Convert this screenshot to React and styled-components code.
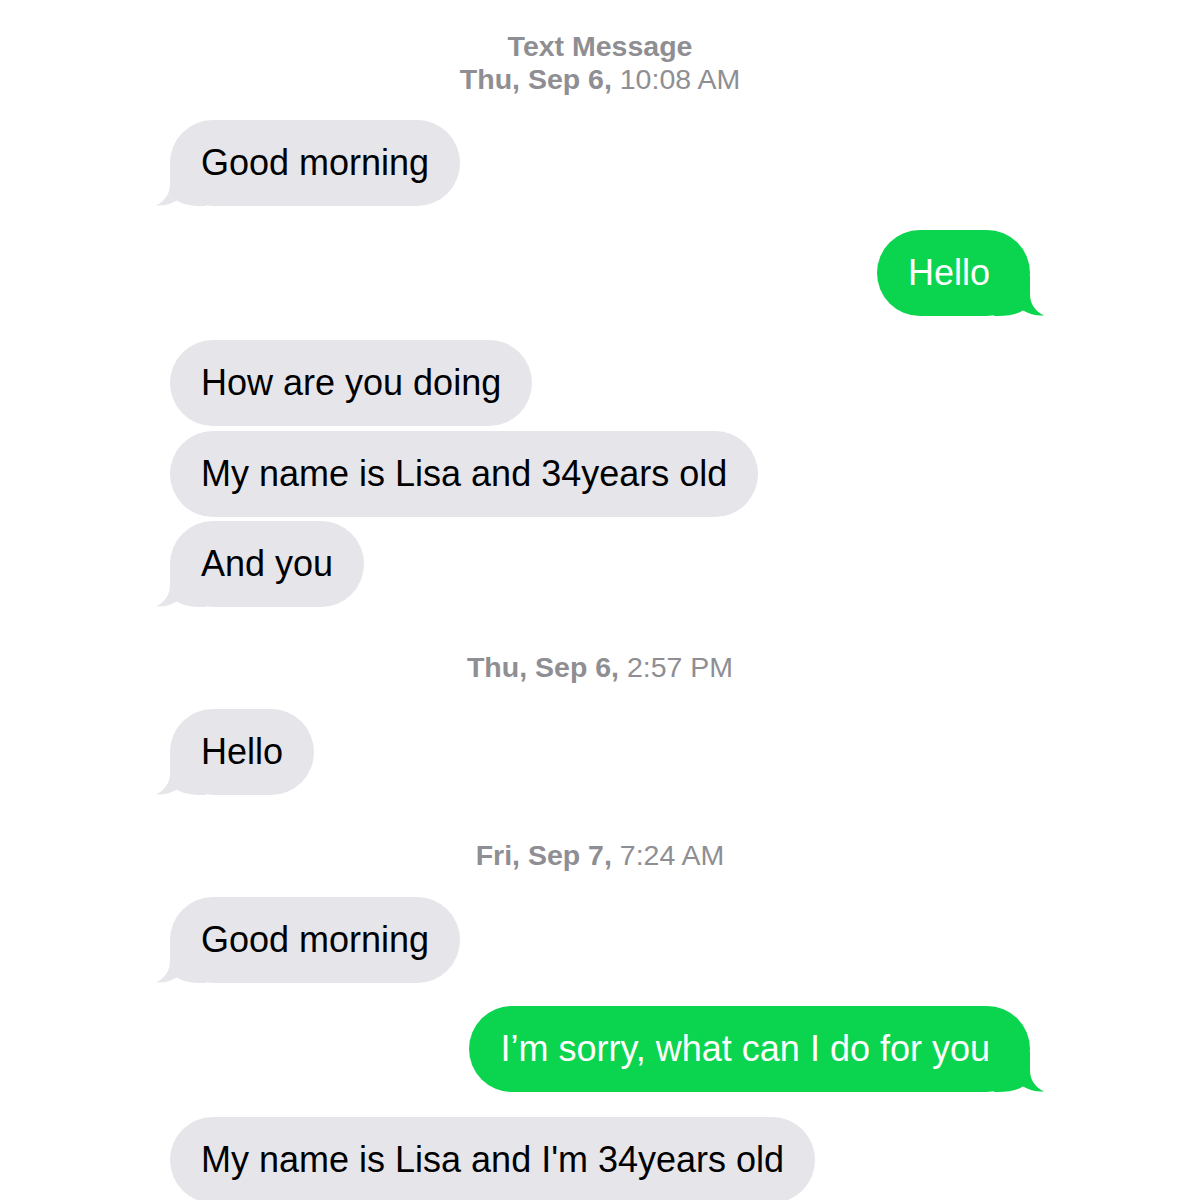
import React from "react";
import styled, { createGlobalStyle } from "styled-components";

const Global = createGlobalStyle`
    body {
        margin: 0;
        background: #ffffff;
        font-family: "Liberation Sans", Arial, sans-serif;
    }
`;

const Page = styled.div`
    width: 1200px;
    height: 1200px;
    overflow: hidden;
    box-sizing: border-box;
    padding: 30px 170px 0;
    display: flex;
    flex-direction: column;
`;

const Stamp = styled.div`
    text-align: center;
    color: #8e8e93;
    font-size: 28.5px;
    line-height: 33px;
    margin: ${(p) => (p.first ? "0 0 24px" : "44px 0 25px")};
    & b {
        font-weight: 700;
    }
`;

const Row = styled.div`
    display: flex;
    justify-content: ${(p) => (p.me ? "flex-end" : "flex-start")};
    margin-top: ${(p) => p.gap || 0}px;
`;

const Bubble = styled.div`
    position: relative;
    background: ${(p) => (p.me ? "#0bd44e" : "#e5e5ea")};
    color: ${(p) => (p.me ? "#ffffff" : "#000000")};
    font-size: 36px;
    line-height: 44px;
    padding: ${(p) => (p.me ? "21px 40px 21px 31px" : "21px 31px 21px 31px")};
    border-radius: 43px;
    white-space: nowrap;
`;

const Text = styled.span`
    position: relative;
    z-index: 1;
`;

const Tail = styled.svg`
    position: absolute;
    bottom: 0;
    width: 50px;
    height: 40px;
    z-index: 0;
    ${(p) => (p.me ? "right: -14px; transform: scaleX(-1);" : "left: -14px;")}
    & path {
        fill: ${(p) => (p.me ? "#0bd44e" : "#e5e5ea")};
    }
`;

const Msg = ({ me, tail, gap, children }) => (
    <Row me={me} gap={gap}>
        <Bubble me={me}>
            {tail && (
                <Tail me={me} viewBox="0 0 50 40">
                    <path d="M14 0 L14 18 C14 28 9 35 0 39.5 C8 40 15 38 21 34.5 C27 38.5 35 40 46 40 L50 40 L50 0 Z" />
                </Tail>
            )}
            <Text>{children}</Text>
        </Bubble>
    </Row>
);

const App = () => {
    return (
        <>
            <Global />
            <Page>
                <Stamp first>
                    <b>Text Message</b>
                    <br />
                    <b>Thu, Sep 6,</b> 10:08 AM
                </Stamp>
                <Msg tail>Good morning</Msg>
                <Msg me tail gap={24}>Hello</Msg>
                <Msg gap={24}>How are you doing</Msg>
                <Msg gap={5}>My name is Lisa and 34years old</Msg>
                <Msg tail gap={4}>And you</Msg>
                <Stamp>
                    <b>Thu, Sep 6,</b> 2:57 PM
                </Stamp>
                <Msg tail>Hello</Msg>
                <Stamp>
                    <b>Fri, Sep 7,</b> 7:24 AM
                </Stamp>
                <Msg tail>Good morning</Msg>
                <Msg me tail gap={23}>I’m sorry, what can I do for you</Msg>
                <Msg gap={25}>My name is Lisa and I'm 34years old</Msg>
            </Page>
        </>
    );
};

export default App;
